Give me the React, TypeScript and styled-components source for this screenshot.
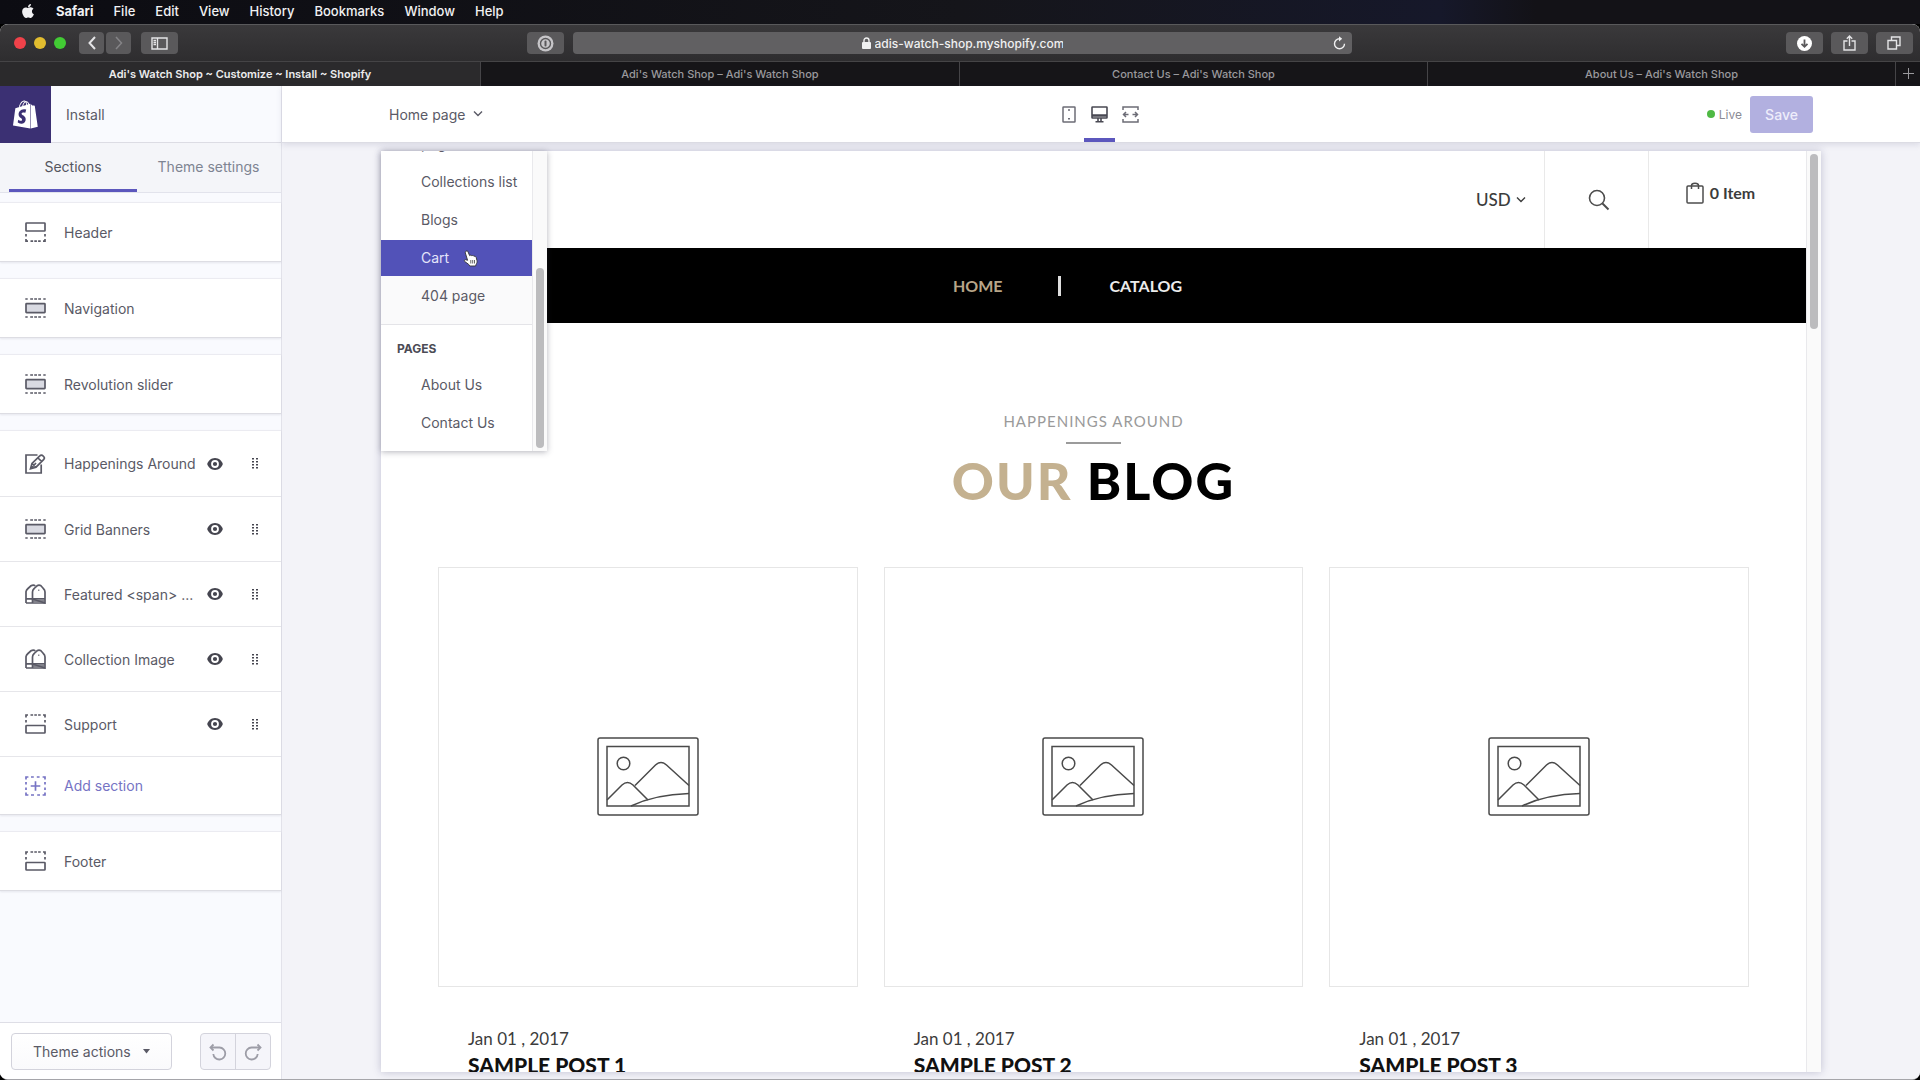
import React from 'react';
import styled, { createGlobalStyle, css } from 'styled-components';
import { FaApple, FaShopify } from 'react-icons/fa';

const UI = `Inter, "Liberation Sans", Arial, sans-serif`;
const STORE = `Lato, "Liberation Sans", Arial, sans-serif`;
const STORE_HEAVY = `"Lato Black", Lato, "Liberation Sans", Arial, sans-serif`;

const GlobalStyle = createGlobalStyle`
  *, *::before, *::after { box-sizing: border-box; }
  body { margin: 0; background: #000; font-family: ${UI}; color: #5a5a66; }
  button, input, select { font: inherit; color: inherit; margin: 0; padding: 0; border: 0; background: none; }
  h1, h2, h3, p, ul { margin: 0; padding: 0; }
  ul { list-style: none; }
  a { color: inherit; text-decoration: none; }
  svg { display: block; flex: none; }
`;

const Screen = styled.div`
  display: flex;
  flex-direction: column;
  height: 100vh;
  overflow: hidden;
`;

/* ---------- system menu bar ---------- */

const MenuBar = styled.nav`
  display: flex;
  align-items: center;
  gap: 20px;
  height: 24px;
  flex: none;
  padding: 0 20px 2px;
  background: linear-gradient(90deg, #0c0c12, #15151a 50%, #16182a 75%, #131217 80%);
  color: #f1f1f3;
  font-size: 13px;
  font-weight: 500;
`;

const MenuItem = styled.button<{ $strong?: boolean }>`
  font-weight: ${(p) => (p.$strong ? 700 : 500)};
`;

/* ---------- browser window ---------- */

const Window = styled.div`
  display: flex;
  flex-direction: column;
  flex: 1;
  min-height: 0;
  border-radius: 8px;
  overflow: hidden;
  background: #fff;
  border-bottom: 1px solid #a5a5aa;
`;

const Toolbar = styled.div`
  display: flex;
  align-items: center;
  height: 38px;
  flex: none;
  padding: 0 7px 0 14px;
  background: linear-gradient(#3a393b, #2e2d2f);
  border-top: 1px solid #59595b;
  border-bottom: 1px solid #454446;
`;

const Lights = styled.div`
  display: flex;
  gap: 8px;
  margin-right: 13px;
`;

const Light = styled.button<{ $color: string }>`
  width: 12px;
  height: 12px;
  border-radius: 50%;
  background: ${(p) => p.$color};
`;

const ToolButton = styled.button<{ $w: number; $dim?: boolean }>`
  display: flex;
  align-items: center;
  justify-content: center;
  width: ${(p) => p.$w}px;
  height: 22px;
  border-radius: 4px;
  background: #5a595b;
  color: ${(p) => (p.$dim ? '#858487' : '#e4e4e6')};
`;

const ToolGroup = styled.div<{ $gap: number }>`
  display: flex;
  gap: ${(p) => p.$gap}px;
`;

const ToolSpace = styled.div<{ $grow: number }>`
  flex: ${(p) => p.$grow} 1 0;
`;

const AddressBar = styled.div`
  display: grid;
  grid-template-columns: 1fr auto 1fr;
  align-items: center;
  flex: 768 1 0;
  height: 22px;
  margin-left: 9px;
  padding: 0 6px;
  border-radius: 4px;
  background: #616062;
  color: #f0f0f1;
  font-size: 12px;
  font-weight: 500;
  & > :last-child { justify-self: end; }
`;

const AddressText = styled.label`
  grid-column: 2;
  display: flex;
  align-items: center;
  gap: 4px;
  input { width: 188px; outline: none; }
`;

const TabStrip = styled.div`
  display: grid;
  grid-template-columns: 481fr 479fr 468fr 468fr 24px;
  height: 24px;
  flex: none;
`;

const BrowserTab = styled.button<{ $active?: boolean }>`
  padding-bottom: 1px;
  background: ${(p) => (p.$active ? '#2b2a2c' : '#161518')};
  color: ${(p) => (p.$active ? '#ececee' : '#9a999d')};
  border-right: 1px solid #454447;
  font-size: 11px;
  font-weight: ${(p) => (p.$active ? 600 : 500)};
  white-space: nowrap;
  &:last-child {
    display: flex;
    align-items: center;
    justify-content: center;
    border-right: 0;
  }
`;

/* ---------- theme editor ---------- */

const Editor = styled.div`
  display: grid;
  grid-template-columns: 282px 1fr;
  flex: 1;
  min-height: 0;
`;

const Side = styled.aside`
  display: flex;
  flex-direction: column;
  min-height: 0;
  background: #f9fafe;
  border-right: 1px solid #e2e2ea;
`;

const Brand = styled.header`
  display: flex;
  align-items: center;
  gap: 15px;
  height: 57px;
  flex: none;
  border-bottom: 1px solid #dcdce4;
  font-size: 14px;
`;

const Logo = styled.a`
  display: flex;
  align-items: center;
  justify-content: center;
  width: 51px;
  height: 57px;
  background: #3b3073;
  color: #fff;
`;

const SideTabs = styled.div`
  display: flex;
  height: 50px;
  flex: none;
  padding-left: 9px;
  background: #f4f5f9;
  border-bottom: 1px solid #e2e3ec;
  font-size: 14px;
`;

const SideTab = styled.button<{ $active?: boolean }>`
  width: ${(p) => (p.$active ? 128 : 143)}px;
  padding-bottom: 3px;
  border-top: 3px solid transparent;
  border-bottom: 3px solid ${(p) => (p.$active ? '#5c57bd' : 'transparent')};
  color: ${(p) => (p.$active ? '#55565f' : '#7e8492')};
`;

const Groups = styled.div`
  display: flex;
  flex-direction: column;
  gap: 16px;
  flex: 1;
  min-height: 0;
  padding-top: 9px;
`;

const Group = styled.ul`
  background: #fff;
  border-top: 1px solid #ebebf1;
  border-bottom: 1px solid #dddde3;
  box-shadow: 0 1px 2px rgba(60, 60, 90, 0.1);
`;

const SectionRow = styled.li<{ $tall?: boolean }>`
  display: flex;
  align-items: center;
  height: ${(p) => (p.$tall ? 65 : 58)}px;
  padding: 0 17px 0 25px;
  & + & { border-top: 1px solid #e6e6ea; }
`;

const SectionName = styled.button<{ $accent?: boolean }>`
  display: flex;
  align-items: center;
  gap: 18px;
  flex: 1;
  color: ${(p) => (p.$accent ? '#7673c4' : 'inherit')};
  font-size: 14px;
  white-space: nowrap;
  text-align: left;
`;

const RowTool = styled.button`
  display: flex;
  justify-content: center;
  width: 18px;
  color: #45454f;
  & + & { margin-left: 22px; }
`;

const SideFooter = styled.footer`
  display: flex;
  align-items: center;
  justify-content: space-between;
  height: 57px;
  flex: none;
  padding: 9px 10px 8px 11px;
  background: #fff;
  border-top: 1px solid #dedee6;
`;

const outlined = css`
  height: 37px;
  border: 1px solid #d3d3dc;
  border-radius: 4px;
`;

const ActionsButton = styled.button`
  ${outlined}
  display: flex;
  align-items: center;
  gap: 12px;
  padding: 0 21px;
  background: linear-gradient(#fff, #fafafc);
  font-size: 14px;
`;

const History = styled.div`
  ${outlined}
  display: flex;
  background: #f5f5fa;
  color: #9d9da7;
`;

const HistoryButton = styled.button`
  display: flex;
  align-items: center;
  justify-content: center;
  width: 34px;
  & + & { width: 35px; border-left: 1px solid #d3d3dc; }
`;

const Main = styled.main`
  display: flex;
  flex-direction: column;
  min-width: 0;
  min-height: 0;
  background: #f3f3f8;
`;

const TopBar = styled.header`
  display: grid;
  grid-template-columns: 1fr auto 1fr;
  height: 57px;
  flex: none;
  padding: 0 107px;
  background: #fff;
  border-bottom: 1px solid #dcdce4;
  box-shadow: 0 2px 6px rgba(70, 70, 110, 0.14);
`;

const PagePicker = styled.div`
  position: relative;
  display: flex;
`;

const PickerButton = styled.button`
  display: flex;
  align-items: center;
  gap: 8px;
  font-size: 14px;
`;

const Menu = styled.div`
  position: absolute;
  top: 65px;
  left: -8px;
  z-index: 2;
  display: grid;
  grid-template-columns: 151px 15px;
  height: 300px;
  background: #fff;
  box-shadow: 0 1px 6px rgba(40, 40, 60, 0.35);
`;

const MenuBody = styled.div`
  display: flex;
  flex-direction: column;
  justify-content: flex-end;
  overflow: hidden;
  font-size: 14px;
`;

const MenuList = styled.ul<{ $divided?: boolean }>`
  display: flex;
  flex-direction: column;
  gap: 2px;
  padding-bottom: 10px;
  ${(p) =>
    p.$divided &&
    css`
      background: linear-gradient(#fff 60%, #fafafb 75%);
      border-bottom: 1px solid #e4e4e8;
    `}
`;

const MenuOption = styled.button<{ $active?: boolean }>`
  display: block;
  width: 100%;
  height: 36px;
  padding: 0 0 2px 40px;
  text-align: left;
  white-space: nowrap;
  background: ${(p) => (p.$active ? '#5252b8' : 'transparent')};
  color: ${(p) => (p.$active ? '#e4e4fa' : 'inherit')};
`;

const MenuHeading = styled.h3`
  padding: 15px 16px 10px;
  font-size: 12px;
  line-height: 17px;
  font-weight: 700;
  color: #4b4b55;
`;

const Track = styled.div`
  display: flex;
  flex-direction: column;
  justify-content: flex-end;
  padding: 3px;
  background: #fafafa;
  border-left: 1px solid #e9e9ec;
`;

const Thumb = styled.div<{ $h: number }>`
  height: ${(p) => p.$h}px;
  width: 8px;
  border-radius: 4px;
  background: #bcbcbe;
`;

const Pointer = styled.svg`
  position: absolute;
  left: 82px;
  top: 99px;
`;

const Devices = styled.div`
  display: flex;
  margin-right: 3px;
`;

const DeviceButton = styled.button<{ $active?: boolean }>`
  display: flex;
  align-items: center;
  justify-content: center;
  width: 31px;
  border-top: 4px solid transparent;
  border-bottom: 4px solid ${(p) => (p.$active ? '#5c57bd' : 'transparent')};
  color: ${(p) => (p.$active ? '#494953' : '#6c6c76')};
`;

const Publish = styled.div`
  display: flex;
  align-items: center;
  justify-content: flex-end;
  gap: 8px;
`;

const Live = styled.span`
  display: flex;
  align-items: center;
  gap: 4px;
  font-size: 12px;
  color: #8b8b95;
  &::before {
    content: '';
    width: 8px;
    height: 8px;
    border-radius: 50%;
    background: #4fb944;
  }
`;

const SaveButton = styled.button`
  width: 63px;
  height: 37px;
  border-radius: 3px;
  background: #b2b0e0;
  color: #eeedfb;
  font-size: 14px;
  font-weight: 500;
`;

/* ---------- storefront preview ---------- */

const Frame = styled.div`
  display: grid;
  grid-template-columns: 1fr 15px;
  flex: 1;
  min-height: 0;
  margin: 8px 99px 7px;
  background: #fff;
  box-shadow: 0 0 8px rgba(60, 60, 110, 0.28);
`;

const Store = styled.div`
  min-width: 0;
  overflow: hidden;
  font-family: ${STORE};
  color: #3c3c3c;
`;

const StoreTrack = styled(Track)`
  justify-content: flex-start;
`;

const StoreTop = styled.header`
  display: flex;
  justify-content: flex-end;
  height: 97px;
  font-size: 17px;
  font-weight: 500;
`;

const StoreCell = styled.div<{ $w: number }>`
  display: flex;
  align-items: center;
  justify-content: center;
  width: ${(p) => p.$w}px;
  & + & { border-left: 1px solid #e9e9e9; }
`;

const Currency = styled.label`
  display: flex;
  align-items: center;
  gap: 4px;
  select { appearance: none; width: 36px; outline: none; }
`;

const SearchButton = styled.button`
  padding-left: 4px;
`;

const CartLink = styled.a`
  display: flex;
  align-items: center;
  gap: 6px;
  padding: 0 14px 14px 0;
  font-weight: 700;
  font-size: 16px;
`;

const StoreNav = styled.nav`
  display: flex;
  align-items: center;
  justify-content: center;
  gap: 48px;
  height: 75px;
  padding-right: 52px;
  background: #000;
  color: #ececec;
  font-size: 16px;
  font-weight: 700;
`;

const NavRule = styled.span`
  width: 3px;
  height: 20px;
  margin-left: 8px;
  background: #dedede;
`;

const NavLink = styled.a<{ $active?: boolean }>`
  color: ${(p) => (p.$active ? '#b8a588' : 'inherit')};
`;

const BlogHead = styled.section`
  display: flex;
  flex-direction: column;
  align-items: center;
  padding: 87px 0 59px;
`;

const Kicker = styled.p`
  font-size: 15px;
  line-height: 22px;
  letter-spacing: 1px;
  color: #9a9a9a;
`;

const KickerRule = styled.span`
  width: 55px;
  height: 2px;
  margin: 10px 0 8px;
  background: #9b9b9b;
`;

const BlogTitle = styled.h1`
  font-family: ${STORE_HEAVY};
  font-size: 52px;
  line-height: 56px;
  font-weight: 900;
  letter-spacing: 2px;
  color: #000;
  span { color: #c4b190; }
`;

const Posts = styled.div`
  display: grid;
  grid-template-columns: repeat(3, 1fr);
  gap: 26px;
  padding: 0 57px;
`;

const PostImage = styled.div`
  display: flex;
  align-items: center;
  justify-content: center;
  aspect-ratio: 1;
  border: 1px solid #e6e6e6;
`;

const PostText = styled.div`
  padding: 40px 30px 0;
`;

const PostDate = styled.p`
  font-size: 17px;
  line-height: 24px;
`;

const PostTitle = styled.h2`
  font-family: ${STORE_HEAVY};
  font-size: 21px;
  line-height: 28px;
  font-weight: 900;
  color: #111;
`;

/* ---------- icons ---------- */

const Chevron = ({ size = 10, stroke = 1.4 }: { size?: number; stroke?: number }) => (
  <svg width={size} height={size} viewBox="0 0 10 10" fill="none" stroke="currentColor" strokeWidth={stroke}>
    <path d="M1 2.5 5 6.5 9 2.5" />
  </svg>
);

type IconKind = 'header' | 'block' | 'edit' | 'shirt' | 'footer' | 'add';

const SectionIcon = ({ kind }: { kind: IconKind }) => (
  <svg width="21" height="20" viewBox="0 0 21 20" fill="none" stroke="currentColor" strokeWidth="1.7">
    {kind === 'header' && (
      <>
        <rect x="1" y="1" width="19" height="8" rx="0.6" />
        <path d="M1 12v2.5M20 12v2.5M1 17v2.2h2M20 17v2.2h-2M5.5 19.2h2.6M9.3 19.2h2.6M13.1 19.2h2.6" />
      </>
    )}
    {kind === 'footer' && (
      <>
        <rect x="1" y="11.5" width="19" height="7.5" rx="0.6" />
        <path d="M1 8.5V6M20 8.5V6M1 3.4V1h2M20 3.4V1h-2M5.5 1h2.6M9.3 1h2.6M13.1 1h2.6" />
      </>
    )}
    {kind === 'block' && (
      <>
        <rect x="1" y="5.6" width="19" height="9" rx="0.6" fill="#d9dae2" />
        <path d="M.3 1h2.4M5.2 1h2.8M9.2 1h2.8M13.2 1H16M18.3 1h2.4M.3 19h2.4M5.2 19h2.8M9.2 19h2.8M13.2 19H16M18.3 19h2.4" />
      </>
    )}
    {kind === 'edit' && (
      <>
        <path d="M12.5 1H1v18h15.2v-8.5" />
        <path d="M5.5 14.8 7 9.5 14.8 1.9a2.2 2.2 0 0 1 3.2 0l.6.6a2.2 2.2 0 0 1 0 3.1L11 13.2zM13 4l3.8 3.6M6 14.5l5-5.5M7 9.5l4 3.7" />
      </>
    )}
    {kind === 'shirt' && (
      <>
        <path d="M1 19V7.600Q1.300 6 3 4.500L6 1.800Q8.500.2 10.300 1.900M7.500 15V8q0-2 1.700-3.500L12 1.800q2-1.300 4 0L18.300 4.500Q20 6 20 8v11z" />
        <path d="M1 19h19M7.500 19v-4M1 14.800h19M7.500 17h12" />
        <path d="M13.800 5.500v1.500" strokeWidth="1" />
      </>
    )}
    {kind === 'add' && (
      <>
        <path d="M1 3.4V1h2.4M6 1h2.8M11.8 1h2.8M17.6 1H20v2.4M20 6v2.6M20 11.4V14M20 16.6V19h-2.4M15 19h-2.8M9 19H6M3.4 19H1v-2.4M1 14v-2.6M1 8.6V6" />
        <path d="M10.5 5.2v9.6M5.7 10h9.6" />
      </>
    )}
  </svg>
);

const EyeIcon = () => (
  <svg width="16" height="12" viewBox="0 0 16 12">
    <path d="M8 0C4 0 1.200 2.800.200 6 1.200 9.200 4 12 8 12s6.800-2.800 7.800-6C14.800 2.800 12 0 8 0z" fill="currentColor" />
    <circle cx="8" cy="6" r="3" fill="none" stroke="#fff" strokeWidth="1.8" />
  </svg>
);

const DragIcon = () => (
  <svg width="8" height="11" viewBox="0 0 8 11" fill="currentColor">
    {[0, 1, 2, 3].map((r) =>
      [0, 1].map((c) => <rect key={`${r}${c}`} x={c * 4 + 1} y={r * 3} width="2" height="1.500" />),
    )}
  </svg>
);

const UndoIcon = ({ flip }: { flip?: boolean }) => (
  <svg width="18" height="18" viewBox="0 0 18 18" fill="none" stroke="currentColor" strokeWidth="1.8">
    <g transform={flip ? 'matrix(-1 0 0 1 18 0)' : undefined}>
      <path d="M2 4.500H10.500a6 6 0 1 1-6.200 6.500" />
      <path d="M4.500 1.500 1.500 4.500l3 3" />
    </g>
  </svg>
);

const PlaceholderImage = () => (
  <svg width="102" height="79" viewBox="0 0 102 79" fill="none" stroke="#4a4a4a" strokeWidth="1.5">
    <rect x="1" y="1" width="100" height="77" rx="2" />
    <rect x="10" y="9.500" width="82" height="59.500" />
    <circle cx="26.500" cy="26.500" r="6.300" />
    <path d="M10 63 25 48q5.500-5 11 0l15 15M38 48.500 58.500 28q5.500-5 11 0L92 48.500" />
    <path d="M34 69Q58 57.500 92 56.500" />
  </svg>
);

/* ---------- data ---------- */

type Section = { name: string; icon: IconKind; tools?: boolean };

const groups: Section[][] = [
  [{ name: 'Header', icon: 'header' }],
  [{ name: 'Navigation', icon: 'block' }],
  [{ name: 'Revolution slider', icon: 'block' }],
  [
    { name: 'Happenings Around', icon: 'edit', tools: true },
    { name: 'Grid Banners', icon: 'block', tools: true },
    { name: 'Featured <span> ...', icon: 'shirt', tools: true },
    { name: 'Collection Image', icon: 'shirt', tools: true },
    { name: 'Support', icon: 'footer', tools: true },
    { name: 'Add section', icon: 'add' },
  ],
  [{ name: 'Footer', icon: 'footer' }],
];

const menus = ['File', 'Edit', 'View', 'History', 'Bookmarks', 'Window', 'Help'];

/* ---------- parts ---------- */

const BrowserChrome = () => (
  <>
    <Toolbar>
      <Lights>
        <Light $color="#f0424a" aria-label="Close" />
        <Light $color="#e2bd2f" aria-label="Minimise" />
        <Light $color="#42cb34" aria-label="Zoom" />
      </Lights>
      <ToolGroup $gap={2}>
        <ToolButton $w={25} aria-label="Back">
          <svg width="8" height="14" viewBox="0 0 8 14" fill="none" stroke="currentColor" strokeWidth="2"><path d="M7 1 1.500 7 7 13" /></svg>
        </ToolButton>
        <ToolButton $w={25} $dim aria-label="Forward">
          <svg width="8" height="14" viewBox="0 0 8 14" fill="none" stroke="currentColor" strokeWidth="1.5"><path d="M1 1 6.500 7 1 13" /></svg>
        </ToolButton>
      </ToolGroup>
      <ToolSpace $grow={10} />
      <ToolButton $w={37} aria-label="Sidebar">
        <svg width="17" height="13" viewBox="0 0 17 13" fill="none" stroke="currentColor" strokeWidth="1.4"><path d="M1 1h15v11H1zM6.500 1v11M2.500 3.500h2.500M2.500 5.500h2.500M2.500 7.500h2.500" /></svg>
      </ToolButton>
      <ToolSpace $grow={349} />
      <ToolButton $w={37} aria-label="Passwords">
        <svg width="17" height="17" viewBox="0 0 17 17"><circle cx="8.500" cy="8.500" r="8" fill="#c6c5c8" /><circle cx="8.500" cy="8.500" r="5" fill="#c6c5c8" stroke="#5a595b" strokeWidth="1.4" /><rect x="7.500" y="5.500" width="2" height="6" rx="1" fill="#5a595b" /></svg>
      </ToolButton>
      <AddressBar>
        <AddressText>
          <svg width="9" height="12" viewBox="0 0 9 12"><rect y="5" width="9" height="7" rx="1" fill="currentColor" /><path d="M2 5.500V3.500a2.500 2.500 0 0 1 5 0v2" fill="none" stroke="currentColor" strokeWidth="1.400" /></svg>
          <input aria-label="Address" defaultValue="adis-watch-shop.myshopify.com" />
        </AddressText>
        <button aria-label="Reload">
          <svg width="13" height="14" viewBox="0 0 13 14" fill="none" stroke="currentColor" strokeWidth="1.400"><path d="M6.500 2.700a5 5 0 1 0 5 5" /><path d="M6 .2 9.200 2.800 6 5.400z" fill="currentColor" stroke="none" /></svg>
        </button>
      </AddressBar>
      <ToolSpace $grow={435} />
      <ToolGroup $gap={8}>
        <ToolButton $w={37} aria-label="Downloads">
          <svg width="15" height="15" viewBox="0 0 15 15"><circle cx="7.500" cy="7.500" r="7.500" fill="#fff" /><path d="M7.500 3.500v7M4.500 7.800l3 3 3-3" fill="none" stroke="#5a595b" strokeWidth="1.800" /></svg>
        </ToolButton>
        <ToolButton $w={37} aria-label="Share">
          <svg width="13" height="16" viewBox="0 0 13 16" fill="none" stroke="currentColor" strokeWidth="1.400"><path d="M4.500 6H1v9h11V6H8.500M6.500 11V1.200M3.800 3.800l2.700-2.700 2.700 2.700" /></svg>
        </ToolButton>
        <ToolButton $w={37} aria-label="Show all tabs">
          <svg width="14" height="14" viewBox="0 0 14 14" fill="none" stroke="currentColor" strokeWidth="1.400"><path d="M1 4.500h8.500V13H1zM4.500 4.500V1H13v8.500H9.500" /></svg>
        </ToolButton>
      </ToolGroup>
    </Toolbar>
    <TabStrip>
      <BrowserTab $active>Adi's Watch Shop ~ Customize ~ Install ~ Shopify</BrowserTab>
      <BrowserTab>Adi's Watch Shop – Adi's Watch Shop</BrowserTab>
      <BrowserTab>Contact Us – Adi's Watch Shop</BrowserTab>
      <BrowserTab>About Us – Adi's Watch Shop</BrowserTab>
      <BrowserTab aria-label="New tab">
        <svg width="11" height="11" viewBox="0 0 11 11" stroke="currentColor" strokeWidth="1"><path d="M5.500 0v11M0 5.500h11" /></svg>
      </BrowserTab>
    </TabStrip>
  </>
);

const Sidebar = () => (
  <Side>
    <Brand>
      <Logo href="#" aria-label="Shopify"><FaShopify size={29} /></Logo>
      <span>Install</span>
    </Brand>
    <SideTabs>
      <SideTab $active>Sections</SideTab>
      <SideTab>Theme settings</SideTab>
    </SideTabs>
    <Groups>
      {groups.map((rows) => (
        <Group key={rows[0].name}>
          {rows.map((s) => (
            <SectionRow key={s.name} $tall={s.tools}>
              <SectionName $accent={s.icon === 'add'}>
                <SectionIcon kind={s.icon} />
                {s.name}
              </SectionName>
              {s.tools && (
                <>
                  <RowTool aria-label={`Hide ${s.name}`}><EyeIcon /></RowTool>
                  <RowTool aria-label={`Move ${s.name}`}><DragIcon /></RowTool>
                </>
              )}
            </SectionRow>
          ))}
        </Group>
      ))}
    </Groups>
    <SideFooter>
      <ActionsButton>
        Theme actions
        <svg width="7" height="5" viewBox="0 0 7 5" fill="currentColor"><path d="M0 0h7L3.500 4.500z" /></svg>
      </ActionsButton>
      <History>
        <HistoryButton aria-label="Undo"><UndoIcon /></HistoryButton>
        <HistoryButton aria-label="Redo"><UndoIcon flip /></HistoryButton>
      </History>
    </SideFooter>
  </Side>
);

const PageMenu = () => (
  <Menu>
    <MenuBody>
      <MenuList $divided>
        <li><MenuOption>pages</MenuOption></li>
        <li><MenuOption>Collections list</MenuOption></li>
        <li><MenuOption>Blogs</MenuOption></li>
        <li><MenuOption $active>Cart</MenuOption></li>
        <li><MenuOption>404 page</MenuOption></li>
      </MenuList>
      <MenuHeading>PAGES</MenuHeading>
      <MenuList>
        <li><MenuOption>About Us</MenuOption></li>
        <li><MenuOption>Contact Us</MenuOption></li>
      </MenuList>
    </MenuBody>
    <Track><Thumb $h={180} /></Track>
    <Pointer width="15" height="18" viewBox="0 0 15 18">
      <path d="M3 1.200c1-.6 1.800 0 2.100.8l1.500 3.600c.7-.7 1.700-.5 2.200.2.800-.5 1.700-.3 2.200.5.900-.3 1.900.1 2.200 1.200l.8 3.200c.3 1.500-.2 2.500-.8 3.500l-.6 1.800H6.800L5.600 14.300 1.700 11.500c-.8-.8-.2-2 1-1.800l1.900.6L2.300 2.900C2.100 2.200 2.300 1.600 3 1.200z" fill="#fff" stroke="#333" strokeWidth="0.900" />
      <path d="M7.800 10v3.500M9.700 10v3.500M11.500 10v3.500" stroke="#555" strokeWidth="0.900" />
    </Pointer>
  </Menu>
);

const EditorBar = () => (
  <TopBar>
    <PagePicker>
      <PickerButton>Home page <Chevron /></PickerButton>
      <PageMenu />
    </PagePicker>
    <Devices>
      <DeviceButton aria-label="Mobile">
        <svg width="14" height="17" viewBox="0 0 14 17" fill="none" stroke="currentColor" strokeWidth="1.500"><rect x="1" y="1" width="12" height="15" rx="0.500" /><path d="M6 4h2M6 12.800h2" /></svg>
      </DeviceButton>
      <DeviceButton $active aria-label="Desktop">
        <svg width="17" height="17" viewBox="0 0 17 17" fill="none" stroke="currentColor" strokeWidth="1.600"><rect x="1" y="1" width="15" height="11" rx="0.500" /><path d="M1 9.500h15" strokeWidth="2.400" /><path d="M7 12v3M10 12v3M4.500 15.800h8" /></svg>
      </DeviceButton>
      <DeviceButton aria-label="Full width">
        <svg width="17" height="17" viewBox="0 0 17 17" fill="none" stroke="currentColor" strokeWidth="1.500"><path d="M1 4V1h15v3M1 13v3h15v-3M1.500 8.500h5M10.500 8.500h5M4 6 1.500 8.500 4 11M13 6l2.500 2.500L13 11" /></svg>
      </DeviceButton>
    </Devices>
    <Publish>
      <Live>Live</Live>
      <SaveButton>Save</SaveButton>
    </Publish>
  </TopBar>
);

const Storefront = () => (
  <Frame>
    <Store>
      <StoreTop>
        <StoreCell $w={86}>
          <Currency>
            <select aria-label="Currency" defaultValue="USD"><option>USD</option></select>
            <Chevron />
          </Currency>
        </StoreCell>
        <StoreCell $w={104}>
          <SearchButton aria-label="Search">
            <svg width="22" height="22" viewBox="0 0 22 22" fill="none" stroke="#4d4d4d" strokeWidth="1.600"><circle cx="9" cy="9" r="7.500" /><path d="m14.500 14.500 6 6" strokeWidth="2" /></svg>
          </SearchButton>
        </StoreCell>
        <StoreCell $w={158}>
          <CartLink href="#">
            <svg width="18" height="22" viewBox="0 0 18 22" fill="none" stroke="#4d4d4d" strokeWidth="1.500"><rect x="1" y="4" width="16" height="17" rx="1" /><path d="M5.500 7V3.500c0-3 7-3 7 0V7" /></svg>
            0 Item
          </CartLink>
        </StoreCell>
      </StoreTop>
      <StoreNav>
        <NavLink href="#" $active>HOME</NavLink>
        <NavRule />
        <NavLink href="#">CATALOG</NavLink>
      </StoreNav>
      <BlogHead>
        <Kicker>HAPPENINGS AROUND</Kicker>
        <KickerRule />
        <BlogTitle><span>OUR</span> BLOG</BlogTitle>
      </BlogHead>
      <Posts>
        {[1, 2, 3].map((n) => (
          <article key={n}>
            <PostImage><PlaceholderImage /></PostImage>
            <PostText>
              <PostDate>Jan 01 , 2017</PostDate>
              <PostTitle>SAMPLE POST {n}</PostTitle>
            </PostText>
          </article>
        ))}
      </Posts>
    </Store>
    <StoreTrack><Thumb $h={175} /></StoreTrack>
  </Frame>
);

export default function App() {
  return (
    <>
      <GlobalStyle />
      <Screen>
        <MenuBar>
          <FaApple size={16} />
          <MenuItem $strong>Safari</MenuItem>
          {menus.map((m) => <MenuItem key={m}>{m}</MenuItem>)}
        </MenuBar>
        <Window>
          <BrowserChrome />
          <Editor>
            <Sidebar />
            <Main>
              <EditorBar />
              <Storefront />
            </Main>
          </Editor>
        </Window>
      </Screen>
    </>
  );
}
